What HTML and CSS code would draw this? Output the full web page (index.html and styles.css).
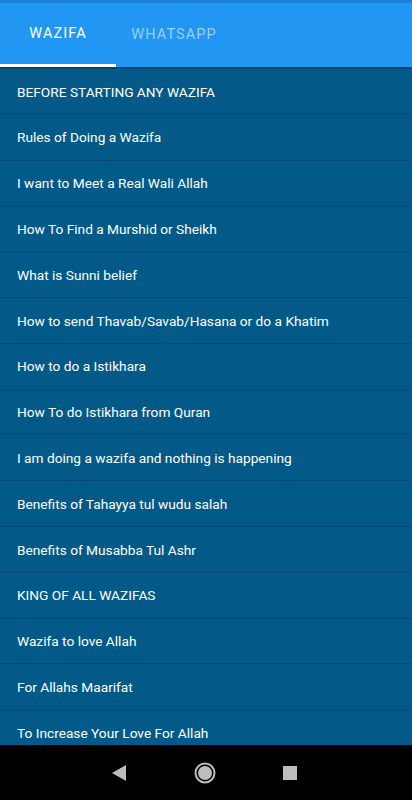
FILE: index.html
```html
<!DOCTYPE html>
<html lang="en">
<head>
    <meta charset="UTF-8">
    <meta name="viewport" content="width=device-width, initial-scale=1.0">
    <title>Wazifa</title>
    <link rel="stylesheet" href="styles.css">
</head>
<body>
    <div class="screen">
        <div class="status-bar"></div>
        <div class="tab-bar">
            <div class="tab active">Wazifa</div>
            <div class="tab">WhatsApp</div>
        </div>
        <div class="tab-shadow"></div>
        <ul class="list">
            <li>BEFORE STARTING ANY WAZIFA</li>
            <li>Rules of Doing a Wazifa</li>
            <li>I want to Meet a Real Wali Allah</li>
            <li>How To Find a Murshid or Sheikh</li>
            <li>What is Sunni belief</li>
            <li>How to send Thavab/Savab/Hasana or do a Khatim</li>
            <li>How to do a Istikhara</li>
            <li>How To do Istikhara from Quran</li>
            <li>I am doing a wazifa and nothing is happening</li>
            <li>Benefits of Tahayya tul wudu salah</li>
            <li>Benefits of Musabba Tul Ashr</li>
            <li>KING OF ALL WAZIFAS</li>
            <li>Wazifa to love Allah</li>
            <li>For Allahs Maarifat</li>
            <li>To Increase Your Love For Allah</li>
        </ul>
        <div class="nav-bar">
            <svg class="nav-icon" width="16" height="18" viewBox="0 0 16 18">
                <polygon points="15,1 15,17 1,9" fill="#bdbdbd"/>
            </svg>
            <svg class="nav-icon" width="22" height="22" viewBox="0 0 22 22">
                <circle cx="11" cy="11" r="9.5" fill="none" stroke="#bdbdbd" stroke-width="2"/>
                <circle cx="11" cy="11" r="7" fill="#bdbdbd"/>
            </svg>
            <svg class="nav-icon" width="14" height="14" viewBox="0 0 14 14">
                <rect x="0" y="0" width="14" height="14" fill="#bdbdbd"/>
            </svg>
        </div>
    </div>
</body>
</html>
```

FILE: styles.css
```css
body {
    margin: 0;
    font-family: Roboto, "Noto Sans", sans-serif;
    background-color: #000;
}

.screen {
    width: 412px;
    height: 800px;
    display: flex;
    flex-direction: column;
    overflow: hidden;
}

.status-bar {
    height: 3px;
    background-color: #1c7fd6;
}

.tab-bar {
    height: 64px;
    display: flex;
    background-color: #2196f3;
}

.tab {
    width: 116px;
    display: flex;
    align-items: center;
    justify-content: center;
    padding-bottom: 2px;
    box-sizing: border-box;
    font-size: 14.5px;
    letter-spacing: 1.1px;
    text-transform: uppercase;
    color: rgba(255, 255, 255, 0.55);
}

.tab.active {
    color: #fff;
    border-bottom: 3px solid #fff;
    padding-bottom: 0;
}

.tab-shadow {
    height: 2px;
    background-color: #03466d;
}

.list {
    flex: 1;
    margin: 0;
    padding: 0;
    list-style: none;
    overflow: hidden;
    background-color: #035a89;
}

.list li {
    height: 44.8px;
    box-sizing: content-box;
    display: flex;
    align-items: center;
    padding: 0 17px;
    border-bottom: 1px solid #024b74;
    color: #fff;
    font-size: 13.7px;
    line-height: 1;
    padding-top: 2px;
    height: 42.8px;
    white-space: nowrap;
}

.nav-bar {
    height: 55px;
    flex-shrink: 0;
    display: flex;
    align-items: center;
    justify-content: center;
    gap: 67px;
    padding-right: 4px;
    background-color: #000;
}
```
